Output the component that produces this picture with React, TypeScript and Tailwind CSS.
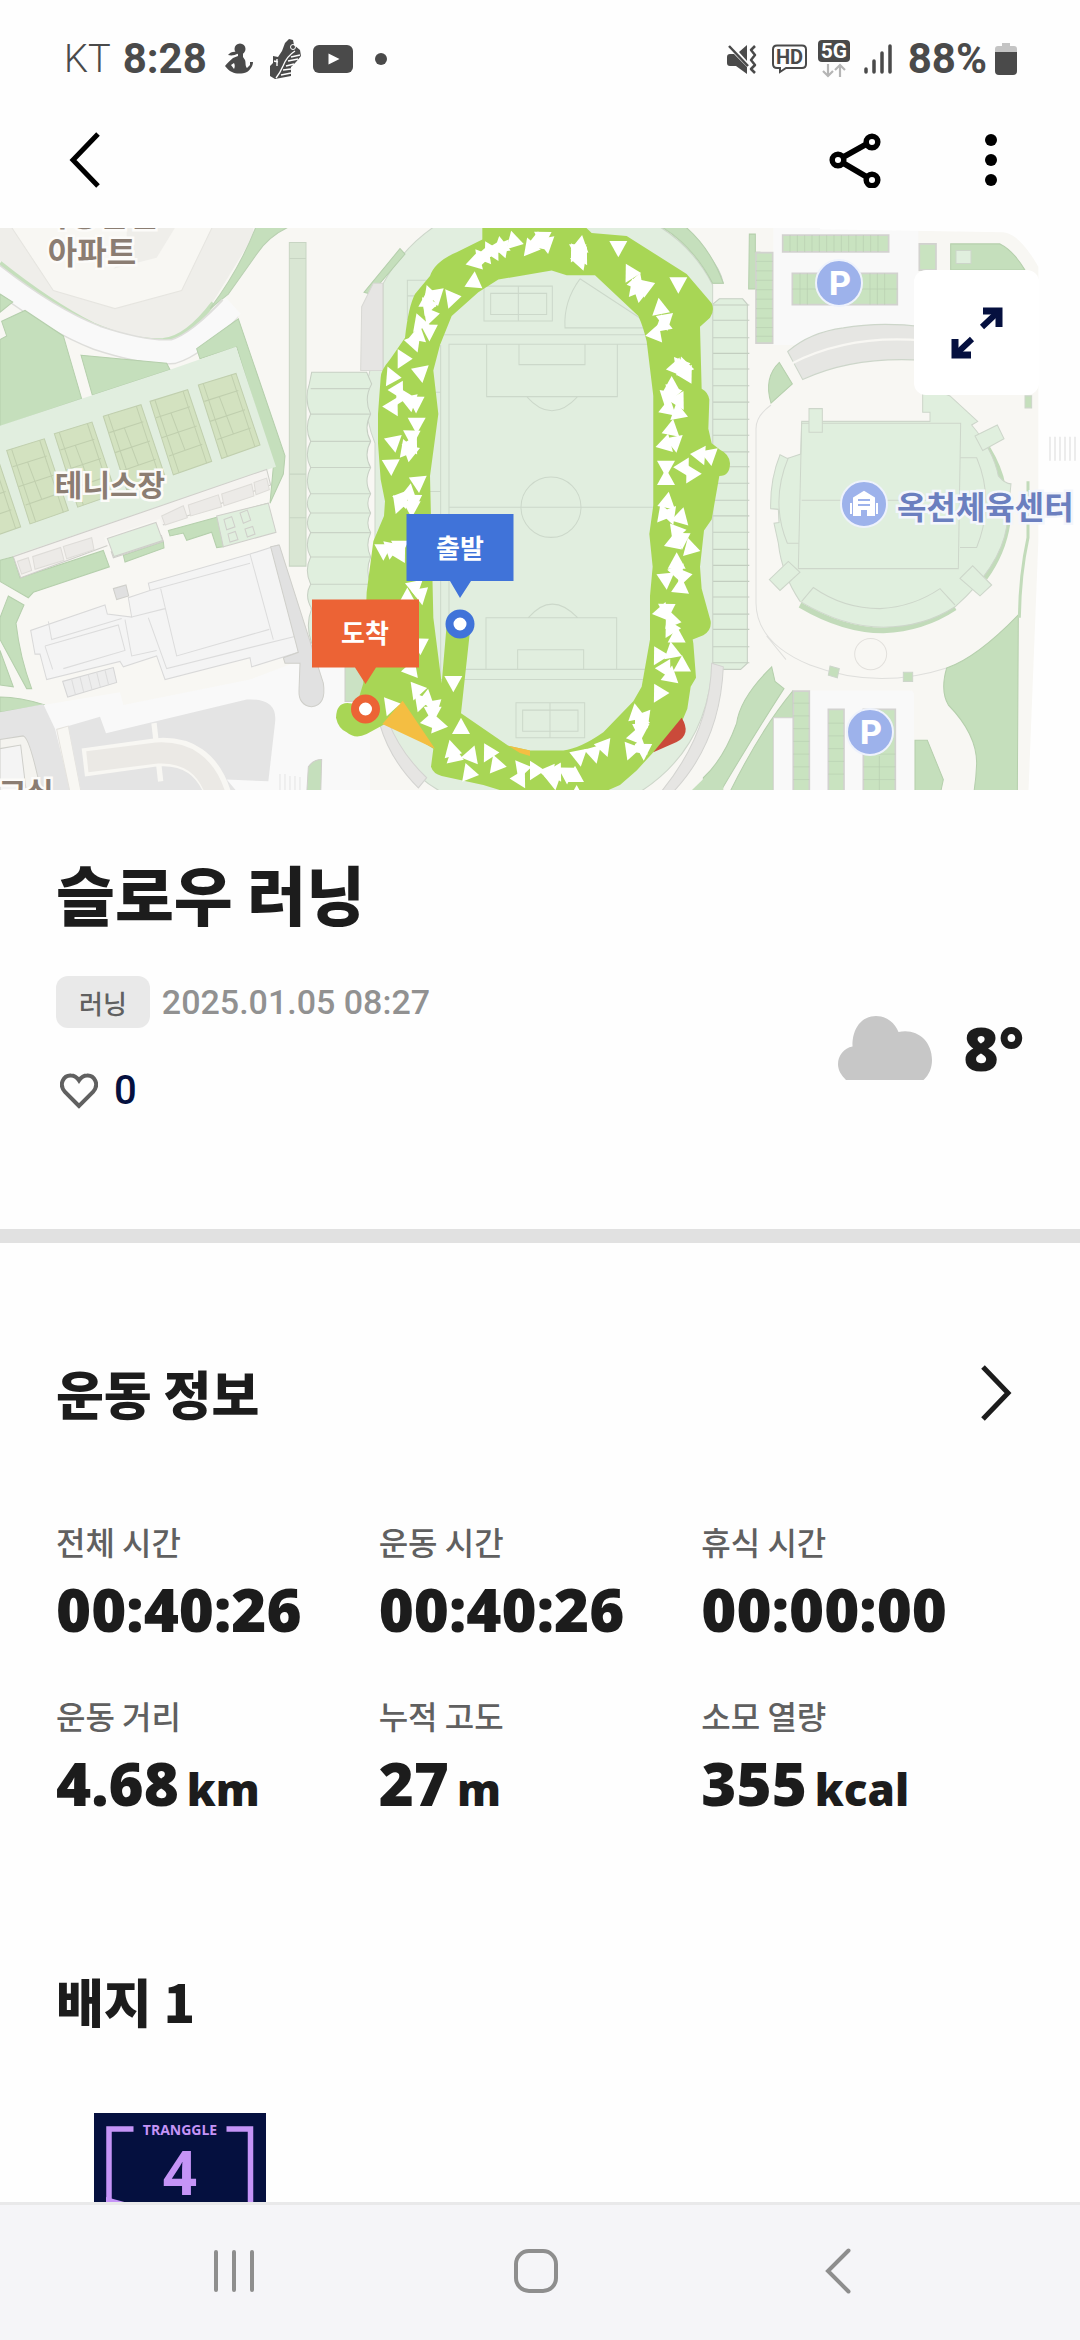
import React from 'react';

interface Stat {
  label: string;
  value: string;
  unit?: string;
}

const STATS: Stat[] = [
  { label: '전체 시간', value: '00:40:26' },
  { label: '운동 시간', value: '00:40:26' },
  { label: '휴식 시간', value: '00:00:00' },
  { label: '운동 거리', value: '4.68', unit: 'km' },
  { label: '누적 고도', value: '27', unit: 'm' },
  { label: '소모 열량', value: '355', unit: 'kcal' },
];

// Direction arrows along the route: x, y, rotation
const ARROWS: [number, number, number][] = [
  // top
  [583, 32, 60], [560, 42, 10], [590, 55, 170], [490, 40, -15], [540, 58, -20], [452, 55, -10], [432, 68, 30],
  [458, 68, 160], [405, 80, 20], [378, 96, 15], [418, 66, -30], [392, 86, -40], [692, 52, 10], [676, 72, -30],
  [698, 80, 30], [692, 102, 160], [688, 66, 60], [805, 64, 180], [840, 128, -30], [862, 155, 20], [892, 168, 70],
  [870, 190, 190], [855, 170, -20], [985, 164, 180], [930, 225, -10], [950, 258, 50], [918, 295, 20], [938, 270, -10],
  // right side
  [980, 388, 20], [1008, 392, 100], [988, 382, -40], [1012, 415, 150], [965, 440, 0], [948, 470, -50], [988, 478, 30],
  [955, 500, 10], [984, 512, -10], [965, 465, 200], [965, 558, 10], [948, 598, 15], [975, 602, 170], [1045, 632, -85],
  [1080, 638, 170], [948, 668, 180], [948, 695, 0], [1003, 670, 150], [1022, 680, -30], [952, 758, 10], [940, 790, -20],
  [962, 792, 40], [994, 800, 15], [976, 840, -40], [972, 868, 10], [1000, 860, 60], [1020, 884, -15], [980, 925, 0],
  [1003, 965, 80], [948, 978, 175], [992, 992, 5], [985, 950, 40], [955, 1055, 60], [938, 1060, 20], [970, 1088, 100],
  [960, 1105, -30], [980, 1128, 0], [925, 1180, -30], [966, 1170, -10], [996, 1208, 0], [948, 1215, 30], [962, 1236, 10],
  [925, 1283, -30], [858, 1340, -10], [875, 1368, 90], [860, 1402, 20], [885, 1352, 40], [840, 1440, -40], [870, 1432, 10],
  [885, 1440, 60], [868, 1385, -60],
  // bottom
  [765, 1430, 40], [735, 1448, 45], [688, 1465, 170], [675, 1512, 0], [655, 1505, 60], [620, 1500, 30], [590, 1505, -80],
  [612, 1530, 170], [560, 1500, 90], [520, 1495, 80], [512, 1518, 30], [680, 1565, 0], [438, 1480, -20], [415, 1447, -30],
  [365, 1455, 20], [355, 1503, -20], [305, 1440, -15], [318, 1462, 110], [333, 1380, 0], [310, 1260, 180], [262, 1370, -20],
  [242, 1360, 20], [255, 1320, 50], [230, 1300, 10], [198, 1275, -40], [218, 1310, 80], [118, 1318, -40], [248, 1345, 180],
  // left side
  [215, 1150, 60], [185, 1218, 20], [215, 1012, 50], [195, 1000, 170], [172, 1022, 0], [150, 888, 180], [152, 908, 150],
  [128, 888, 70], [100, 898, 180], [205, 712, 175], [178, 735, 10], [195, 755, 60], [145, 762, -40], [185, 780, 180],
  [160, 748, 40], [123, 665, 178], [132, 602, 170], [180, 628, 190], [188, 600, 30], [168, 612, -20], [190, 578, 60],
  [200, 550, 180], [202, 485, 60], [180, 490, 170], [130, 495, 30], [152, 465, -30], [146, 450, 30], [130, 418, 95],
  [213, 410, 170], [163, 368, 90], [195, 318, 40], [205, 298, 10], [242, 287, 60], [208, 266, -20], [245, 248, 80],
  [232, 205, 0], [262, 190, 50], [232, 218, -40], [245, 195, 100], [310, 200, 80], [372, 152, 5],
];

const COURTS: [number, number][] = [[0, 0], [-145, 45], [-285, 86], [-432, 134], [-575, 180], [-718, 225]];

const LEFT_TERRACE = [450, 520, 595, 667, 739, 792, 846, 913, 988, 1055];
const RIGHT_TERRACE = [220, 262, 310, 353, 396, 442, 487, 534, 578, 624, 665, 710, 757, 800, 845, 892, 936, 980, 1023, 1070, 1112, 1160, 1204];

const sans = "[font-family:'Noto_Sans_CJK_KR',sans-serif]";
const numeric = "[font-family:'Open_Sans','Noto_Sans_CJK_KR',sans-serif]";
const system = "[font-family:Roboto,'Noto_Sans_CJK_KR',sans-serif]";

const StatusBar: React.FC = () => (
  <div className={`flex h-[118px] items-center justify-between pl-16 pr-[63px] text-[#4a4a4a] ${system}`}>
    <div className="flex items-center text-[42px] leading-none">
      <span className="text-[38px] font-light">KT</span>
      <span className="ml-3 font-bold">8:28</span>
      {/* yoga pose */}
      <svg className="ml-[18px] h-8 w-[28px]" viewBox="0 0 28 32" fill="currentColor">
        <circle cx="15" cy="6" r="5.5" />
        <path d="M12 9C9 8 5 9 3 12c4 1 7 0 9-1zM13 10h5v4l2 3c1 3 0 6 2 8l3-3v-3h3c0 4-3 8-6 10-5 2-11 2-15 0-3-1-5-4-7-6 2-3 5-5 8-8l5-2zM6 22l3 4c1-2 1-4 0-6z" fillRule="evenodd" />
      </svg>
      {/* running shoe */}
      <svg className="ml-[17px] h-10 w-[31px]" viewBox="0 0 31 40">
        <path d="M15 4l4-4 4 1 1 5 6 5 1 6-5 6-5 5v9L5 40l-5-3V27l3-3 0-7 5 1 4-6z" fill="#4a4a4a" />
        <path d="M25 12Q17 17 13 27 10 34 6 39M30 16l-9 2M28 20l-10 2M24 25l-8 2M21 30l-8 1M21 34l-10 2M7 20v7M4 22l4 1" stroke="#fefefe" strokeWidth="1.4" fill="none" />
        <circle cx="23" cy="8" r="2.5" fill="none" stroke="#fefefe" />
      </svg>
      <svg className="ml-3 h-7 w-10" viewBox="0 0 40 28">
        <rect width="40" height="28" rx="6" fill="#4a4a4a" />
        <path d="M15.500 8.500v11l11-5.500z" fill="#fff" />
      </svg>
      <span className="ml-[22px] size-3 rounded-full bg-[#4a4a4a]" />
    </div>
    <div className="flex items-center text-[42px] leading-none">
      {/* mute + vibrate */}
      <svg className="h-[29px] w-[30px]" viewBox="0 0 30 29">
        <path d="M0 12q0-3 3-3h4L20 22v7L9 21H3q-3 0-3-3zM20 0v16l-8-9z" fill="#4a4a4a" />
        <path d="M2 1l19 20" stroke="#4a4a4a" strokeWidth="2.500" />
        <path d="M28 1l-4 4 4 5-4 5 4 5-4 4 4 4" fill="none" stroke="#4a4a4a" strokeWidth="2.500" strokeLinejoin="round" />
      </svg>
      <svg className="ml-[15px] h-[30px] w-[36px]" viewBox="0 0 36 30">
        <path d="M5 1.500h25q4 0 4 4V20q0 4-4 4H14l-6 4v-4H5q-4 0-4-4V5.500q0-4 4-4z" fill="none" stroke="#4a4a4a" strokeWidth="2" />
        <text x="17.500" y="20" textAnchor="middle" fontSize="20" fontWeight="700" fill="#4a4a4a">HD</text>
      </svg>
      <svg className="ml-[10px] h-[38px] w-8" viewBox="0 0 32 38">
        <rect width="32" height="22" rx="4" fill="#4a4a4a" />
        <text x="16" y="18" textAnchor="middle" fontSize="21" fontWeight="700" fill="#fff">5G</text>
        <path d="M10 24v12M5 31l5 5 5-5M22 37V25M17 30l5-5 5 5" fill="none" stroke="#b5b5b5" strokeWidth="2.200" />
      </svg>
      <svg className="ml-[14px] h-[30px] w-7" viewBox="0 0 28 30">
        <path d="M2 28v-3M10 28V17M18 28V9M26 28V2" stroke="#4a4a4a" strokeWidth="3.500" strokeLinecap="round" />
      </svg>
      <span className="ml-4 font-bold">88%</span>
      <svg className="ml-2 h-8 w-[22px]" viewBox="0 0 22 32">
        <path d="M7 0h8v3h4q3 0 3 3v4H0V6q0-3 3-3h4z" fill="#c4c4c4" />
        <path d="M0 9h22v19q0 4-4 4H4q-4 0-4-4z" fill="#4a4a4a" />
      </svg>
    </div>
  </div>
);

const AppBar: React.FC = () => (
  <header className="flex h-[110px] items-center justify-between pb-[26px] pl-[60px] pr-16">
    <button type="button" aria-label="뒤로" className="flex size-[60px] items-center justify-start pl-2">
      <svg className="h-14 w-8" viewBox="0 0 32 56" fill="none" stroke="#000" strokeWidth="5">
        <path d="M30 2L5 28l25 26" />
      </svg>
    </button>
    <div className="flex items-center gap-[85px]">
      <button type="button" aria-label="공유">
        <svg className="h-14 w-[52px]" viewBox="0 0 52 56" fill="none" stroke="#000">
          <path d="M9 28L43 9M9 28l34 20" strokeWidth="6" />
          <g fill="#fff" strokeWidth="5.500">
            <circle cx="9" cy="28" r="5.800" />
            <circle cx="43" cy="10" r="5.800" />
            <circle cx="43" cy="48" r="5.800" />
          </g>
        </svg>
      </button>
      <button type="button" aria-label="더보기" className="w-[50px]">
        <svg className="mx-auto h-14 w-3" viewBox="0 0 12 56">
          <circle cx="6" cy="8" r="6" />
          <circle cx="6" cy="28" r="6" />
          <circle cx="6" cy="48" r="6" />
        </svg>
      </button>
    </div>
  </header>
);

// West part of the map: apartments, tennis courts and the gym
const WestBlock: React.FC = () => (
  <g transform="matrix(.33333 0 0 .36364 0 225)" stroke="#cfcfca" strokeWidth="3">
    <path d="M0 0V100Q150 210 280 270Q400 315 480 315Q560 310 640 210L760 30V0z" fill="#efeeea" stroke="none" />
    <path d="M30 0L160 180 345 230 545 180 640 0z" fill="#f8f7f3" stroke="#e6e5e0" />
    <path d="M380 90L340 120 470 90 530 0H380z" fill="#efeeea" stroke="none" />
    <path d="M0 105Q150 215 280 275Q400 322 490 318Q560 312 640 215" fill="none" stroke="#c5dfbc" strokeWidth="14" />
    <path d="M880 0Q810 25 770 80L685 190 630 230Q720 120 770 0z" fill="#c5dfbc" stroke="#b9d0b1" />
    <path d="M-20 138Q150 260 290 310Q440 355 520 348Q590 330 690 228" fill="none" stroke="#dededb" strokeWidth="70" />
    <path d="M-20 138Q150 260 290 310Q440 355 520 348Q590 330 700 222" fill="none" stroke="#f9f9f9" strokeWidth="62" />
    <path d="M0 190L38 212 0 240zM5 265L75 235 190 305 245 478 0 555V315L20 305zM243 358L500 380 510 398 277 468zM590 340L715 258 855 635 850 685 810 765 820 665 710 335 600 368z" fill="#c5dfbc" stroke="#b5cfac" />
    <path d="M0 552L245 478 277 468 510 398 708 335 828 665 0 922z" fill="#e1eedf" stroke="none" />
    {COURTS.map(([dx, dy]) => (
      <g key={dx} transform={`translate(${dx} ${dy})`} stroke="#c0cfae">
        <path d="M595 440L708 408 780 605 665 642z" fill="#d3e2c0" />
        <path d="M610 437L682 636M694 412L765 610M613 485L715 455M652 590L752 558M630 540L735 508M658 472L700 574" fill="none" />
      </g>
    ))}
    <path d="M505 840L805 765 670 885 650 887 635 845 560 867 550 847 510 855zM310 895L328 940 100 1010 85 1025 0 980V922L40 912 60 970zM370 908L490 870 492 888 375 927z" fill="#c5dfbc" stroke="#b5cfac" />
    <path d="M320 860L470 815 490 870 340 915zM650 800L805 765 828 845 670 885z" fill="#e0efde" />
    <path d="M672 810L695 802 705 830 680 838zM720 792L742 784 752 812 730 820zM684 850L706 843 714 865 690 872zM735 836L758 829 765 850 742 858z" fill="#e0efde" />
    <path d="M40 912L800 672 812 715 62 970z" fill="#f5f3f0" />
    <path d="M312 860L480 808 500 848 330 898z" fill="#f8f7f3" stroke="none" />
    <path d="M322 862L468 818 488 868 342 912z" fill="#e0efde" />
    <path d="M52 925L85 915 95 950 65 960zM98 912L182 887 192 922 105 947zM190 884L275 860 282 893 200 918zM485 800L550 772 562 805 495 825zM565 770L655 742 665 775 572 800zM665 740L755 712 762 745 672 772zM762 708L800 696 808 728 768 742z" fill="#eceae7" stroke="#dedcd8" />
    <path d="M25 1020L72 1045 48 1095Q60 1190 95 1275H80L0 1140V1080zM0 1170L40 1270 0 1265zM0 1298Q60 1298 135 1320L0 1340z" fill="#c5dfbc" stroke="#b5cfac" />

    {/* gym */}
    <path d="M445 985L750 905 835 880 895 1175 755 1215 750 1190 495 1250 470 1185 370 1215 360 1200 140 1250 120 1180 105 1180 92 1115 315 1045 322 1070 395 1078 385 1025 450 1005z" fill="#f4f4f4" stroke="#d9d9d9" />
    <path d="M450 1005L750 930M482 1000L530 1185 808 1112M750 905L820 1140M395 1078L495 1055M445 1080L500 1220 890 1130M375 1085L395 1185 470 1170M135 1158L355 1100 375 1170 190 1220M145 1090L155 1140 365 1082M135 1158L158 1222" fill="none" stroke="#dcdcdc" />
    <path d="M340 1000L378 990 386 1020 350 1030z" fill="#e0e0e0" />
    <path d="M130 1320L360 1285 370 1320 750 1250 895 1200 1035 1215H1110V1568H800L240 1568z" fill="#f9f9f9" stroke="none" />
    <path d="M188 1255L340 1217 350 1258 203 1298z" fill="#ededed" stroke="#d5d5d5" />
    <path d="M215 1250L226 1290M240 1243L251 1284M265 1237L276 1278M290 1230L301 1271M315 1224L326 1265" stroke="#dcdcdc" />
    <path d="M812 885L838 880 970 1260Q980 1320 935 1325Q895 1320 897 1280L900 1205 855 1205 850 1190 895 1175z" fill="#e1e1e1" />
    <path d="M0 1340L130 1318 165 1385 215 1568H0z" fill="#e4e4e4" stroke="none" />
    <path d="M170 1387L205 1378 245 1568H212z" fill="#f8f7f3" stroke="#e5e3de" />
    <path d="M205 1378L300 1352 318 1398 740 1305Q835 1300 825 1370L805 1530 680 1525 720 1568H245z" fill="#e4e4e4" stroke="none" />
    <path d="M462 1370L482 1530" stroke="#f8f7f3" strokeWidth="16" />
    <path d="M250 1478L470 1450Q610 1440 655 1568" fill="none" stroke="#f8f7f3" strokeWidth="78" />
    <path d="M262 1476L470 1452Q605 1445 648 1568" fill="none" stroke="#ebe9e5" strokeWidth="58" />
    <path d="M0 1415L70 1405Q90 1410 125 1568H0z" fill="#f4f3ef" />
    <path d="M0 1440L62 1430 80 1568H0z" fill="#f4f4f4" />
    <path d="M920 1568L925 1490Q940 1470 965 1470L962 1568z" fill="#c5dfbc" />
    <path d="M840 1510V1568M855 1510V1568M870 1515V1568M885 1515V1568M900 1518V1568" stroke="#e4e4e4" />

    <path d="M868 48H918V938H868z" fill="#d9e6d3" stroke="#c8d5c3" />
    <path d="M868 92H918M868 685H918M868 805H918" stroke="#c8d5c3" />
    <path d="M1035 1200H1110V1310H1035z" fill="#cbe2c4" />
  </g>
);

// Running track with the football pitch, and the recorded route on it
const TrackBlock: React.FC = () => (
  <g transform="matrix(.33333 0 0 .36364 350 225)">
    <path d="M260 0Q160 60 100 160V400H60Q30 500 75 600V1260Q120 1500 300 1570H850Q1075 1450 1088 1200V165Q1030 60 920 0z" fill="#e1eedf" stroke="#cdd6ca" strokeWidth="3" />
    <path d="M42 185L150 65 165 80 62 190zM920 0H1000Q1080 60 1120 160H1088Q1030 60 940 8z" fill="#c5dfbc" stroke="#b5cfac" strokeWidth="3" />
    <path d="M35 225L70 160H98V400H32z" fill="#e6e5e3" stroke="#d8d8d4" strokeWidth="3" />
    <path d="M-115 405H50L65 437Q40 478 62 520Q40 558 62 595Q40 632 62 667Q40 705 62 739Q45 765 62 792Q45 820 62 846Q45 880 62 913Q45 950 62 988Q45 1020 62 1055V1150H-115Q-135 1100 -115 1055Q-138 1020 -118 988Q-138 950 -118 913Q-138 880 -118 846Q-138 820 -118 792Q-138 765 -118 739Q-138 705 -118 667Q-138 632 -118 595Q-138 558 -118 520Q-138 478 -122 437z" fill="#e0efde" stroke="#c6cfc3" strokeWidth="3" />
    {LEFT_TERRACE.map((y) => (
      <path key={y} d={`M-118 ${y}H60`} stroke="#c9d3c6" strokeWidth="3" />
    ))}
    <path d="M90 1375L115 1365Q150 1450 230 1520L205 1548Q120 1470 90 1375zM1085 1205L1120 1215Q1110 1430 960 1568H925Q1080 1400 1085 1205z" fill="#e6e5e3" stroke="#d3d3d0" strokeWidth="3" />
    <path d="M1120 1470L1010 1568H1120z" fill="#c5dfbc" />

    <g fill="none" stroke="#ccd8ca" strokeWidth="3">
      <path d="M270 302H890M270 1250H890M272 330V1260M297 328H912V1222H297zM297 776H912M410 328H802V472H410zM507 328H705V384H507zM530 472Q605 550 683 472M408 1222V1080H800V1222M503 1222V1168H701V1222M535 1080Q605 1005 683 1080" />
      <ellipse cx="603" cy="776" rx="90" ry="83" />
      <path d="M402 168H607V264H402zM422 188H590V246H422zM505 168V264M498 1314H704V1410H498zM518 1334H684V1392H518zM600 1314V1410" />
      <path d="M690 148L880 262M690 148Q640 210 645 283H880" />
      <path d="M172 152H240V260H172zM172 195H230" />
      <path d="M240 460H272M240 733H272" />
    </g>

    <path
      d="M397 0V40L320 75Q255 100 240 140L195 190Q175 225 165 310L120 370Q92 400 92 420L84 520V600L92 700 105 760 102 800 70 870 50 1010 40 1260 20 1320Q-40 1300 -42 1355Q-35 1385 -10 1395Q15 1415 50 1400L120 1365 250 1440 243 1490Q250 1510 275 1515L400 1540 500 1568H740L810 1540 860 1500 910 1450 980 1400 1012 1330 1022 1270 1038 1245 1030 1150 1028 1140 1060 1128Q1085 1115 1082 1090L1055 1000 1050 940 1062 840 1085 810 1108 690Q1140 690 1140 655Q1138 630 1110 618L1085 600 1075 560 1078 480Q1075 460 1055 450L1050 280 1080 255Q1095 235 1085 215L1010 135 830 30 725 22 700 0z
         M605 125L445 150 385 185 305 250 270 330 250 400 265 520 240 690 247 960 250 1080 275 1260 290 1100H362L333 1343 475 1432 540 1445H640Q690 1440 760 1395L850 1310 875 1270 900 1140V1020L908 940 898 850 910 770V470L890 320Q880 280 865 250L735 138H650z"
      fill="#a8d655"
      fillRule="evenodd"
    />
    <path d="M158 1308L255 1440 97 1372zM475 1432L540 1445V1460L510 1452z" fill="#f4be42" />
    <path d="M995 1355Q1025 1400 980 1422L910 1450z" fill="#ca4a3a" />
    {ARROWS.map(([x, y, deg], i) => (
      <path key={i} d="M0-25L27 20H-27z" fill="#fff" transform={`translate(${x} ${y}) rotate(${deg})`} />
    ))}
  </g>
);

// Stadium side: sports centre, parking lots and gardens
const EastBlock: React.FC = () => (
  <g transform="matrix(.33333 0 0 .36364 710 225)" stroke="#cdd6ca" strokeWidth="3">
    <path d="M190 8H625V330H190zM300 1280H600Q612 1280 612 1295V1568H300z" fill="#f9f9f9" stroke="none" />
    <path d="M330 0V12L880 20Q930 25 985 115V870L955 1568H1130V0z" fill="#fefefe" stroke="none" />
    <path d="M28 203H98L112 218V1205L92 1222H28L8 1205V218z" fill="#e0efde" stroke="#c6cfc3" />
    {RIGHT_TERRACE.map((y) => (
      <path key={y} d={`M4 ${y}H118`} stroke="#c3cec0" />
    ))}
    <path d="M0 90Q30 120 40 160H0z" fill="#c5dfbc" />
    <path d="M118 25H136V75H150V176H116zM722 52H870Q910 70 945 124H722z" fill="#c5dfbc" stroke="#b5cfac" />
    <path d="M738 70H783V106H738z" fill="#e0efde" />
    <path d="M138 76H188V325H138zM218 28H536V74H218zM247 133H562V219H247zM628 52H678V124H628z" fill="#c9e3c0" stroke="#d2d2cf" strokeWidth="5" />
    <path d="M138 100H188M138 126H188M138 152H188M138 178H188M138 204H188M138 230H188M138 256H188M138 282H188M138 306H188M240 28V74M262 28V74M284 28V74M306 28V74M328 28V74M350 28V74M372 28V74M394 28V74M416 28V74M438 28V74M460 28V74M482 28V74M504 28V74M270 133V219M292 133V219M480 133V219M502 133V219M524 133V219M247 176H562" stroke="#b9d0b1" strokeWidth="2" />
    <path d="M233 348Q300 295 400 283Q510 265 640 280V372Q430 360 278 425z" fill="#e6e6e3" />
    <path d="M247 380Q420 300 640 318" fill="none" stroke="#f8f7f3" strokeWidth="6" />
    <path d="M208 378L247 437 183 490Q160 420 208 378z" fill="#c5dfbc" stroke="#b5cfac" />
    <path d="M183 495Q138 525 138 560V1040Q140 1150 300 1210Q500 1280 710 1218M170 1130L228 1195" fill="none" stroke="#dfdfdc" />

    {/* sports centre */}
    <path d="M270 1045Q400 1115 520 1115Q640 1110 735 1052M832 612Q870 670 878 715M893 820Q880 900 825 970" fill="none" stroke="#c2dbba" strokeWidth="16" />
    <path d="M275 540H660V515H638V440L720 470 803 540 785 550Q850 620 865 690Q885 712 903 712L890 830Q870 940 735 1050Q640 1106 520 1106Q400 1106 270 1035Q215 960 205 875L192 820 207 818 205 782 182 780Q180 700 210 632L232 642 272 630z" fill="#e0efde" />
    <path d="M275 545H752L745 945H265zM275 757H750M752 640H800Q855 760 800 887H750M235 640Q180 760 232 875H265M275 1035L310 997Q400 1055 510 1055Q610 1050 690 1000L735 1045" fill="none" />
    <path d="M178 975L235 925 270 955 210 1005zM750 972L788 937 845 990 810 1020zM795 580L862 550 882 588 818 620zM297 505H337V570H297z" fill="#e0efde" />
    <ellipse cx="482" cy="1180" rx="48" ry="43" fill="none" stroke="#e2e0dc" />
    <path d="M360 1213L388 1220 382 1245 355 1238zM580 1230H608V1255H580z" fill="#c5dfbc" />

    <path d="M925 1072Q800 1190 710 1218Q690 1280 715 1320Q800 1400 800 1480Q798 1530 790 1568H922z" fill="#c5dfbc" stroke="#b5cfac" />
    <path d="M954 705V860Q930 960 928 1080" fill="none" stroke="#c2dbba" strokeWidth="9" />
    <path d="M945 470H965V503H945z" fill="#c5dfbc" />
    <path d="M1020 582V648M1035 582V648M1050 582V648M1065 582V648M1080 582V648M1095 582V648" stroke="#ececec" strokeWidth="6" />

    {/* south lots */}
    <path d="M185 1215Q90 1300 80 1370Q40 1470 -20 1520V1568H25Q120 1420 222 1275L195 1255zM248 1282Q150 1390 55 1568H190V1355H250zM615 1417H652L700 1525 690 1568H615z" fill="#c5dfbc" stroke="#b5cfac" />
    <path d="M190 1355H250V1568H190z" fill="#f9f9f9" stroke="#d5d5d2" />
    <path d="M250 1282H298V1568H250zM355 1332H402V1568H355zM460 1332H556V1568H460z" fill="#c9e3c0" stroke="#d2d2cf" strokeWidth="5" />
    <path d="M250 1315H298M250 1350H298M250 1385H298M250 1420H298M250 1455H298M250 1490H298M250 1525H298M355 1370H402M355 1405H402M355 1440H402M355 1475H402M355 1510H402M460 1455H556M460 1490H556M460 1525H556M508 1460V1568" stroke="#b9d0b1" strokeWidth="2" />
  </g>
);

const RouteMap: React.FC = () => (
  <section className="relative">
    <svg className={`block w-full ${sans}`} viewBox="0 228 1080 562" role="img" aria-label="운동 경로 지도">
      <rect y="228" width="1080" height="562" fill="#f8f7f3" />
      <EastBlock />
      <WestBlock />
      <TrackBlock />

      <g fill="#8b7d72" stroke="#fcfbf9" strokeWidth="5" paintOrder="stroke" fontWeight="700" textAnchor="middle">
        <text x="99" y="226" fontSize="32">가양한신</text>
        <text x="92" y="264" fontSize="32">아파트</text>
        <text x="110" y="496" fontSize="30">테니스장</text>
        <text x="26" y="804" fontSize="30">교실</text>
      </g>

      <g fill="#9db2eb" stroke="#eef2fc" strokeWidth="2">
        <circle cx="839" cy="283" r="23" />
        <circle cx="870" cy="732" r="23" />
        <circle cx="864" cy="504" r="23" />
      </g>
      <g className="[font-family:Roboto,sans-serif]" fill="#fff" fontSize="34" fontWeight="800" textAnchor="middle">
        <text x="840" y="295">P</text>
        <text x="871" y="744">P</text>
      </g>
      <path d="M854 498l10-6 10 6v17h-6v-6h-8v6h-6zM851 503v11M877 503v11" fill="#fff" stroke="#fff" strokeWidth="2" />
      <path d="M858 500h12M858 505h12" stroke="#9db2eb" strokeWidth="2" />
      <text x="897" y="519" fontSize="32" fontWeight="700" fill="#6b7fbf" stroke="#f4f6fc" strokeWidth="5" paintOrder="stroke">옥천체육센터</text>

      {/* finish */}
      <path d="M312 599.500H419V667.500H376L365.500 684 355 667.500H312z" fill="#ec6335" />
      <circle cx="365.500" cy="709" r="10.500" fill="#fff" stroke="#ec6335" strokeWidth="8" />
      {/* start */}
      <path d="M406.500 514H513.500V581H471L460 598 450 581H406.500z" fill="#4073d9" />
      <circle cx="460" cy="624" r="10.500" fill="#fff" stroke="#4073d9" strokeWidth="8" />
      <g fill="#fff" fontSize="26" fontWeight="700" textAnchor="middle">
        <text x="365" y="643">도착</text>
        <text x="460" y="558">출발</text>
      </g>
    </svg>
    <button type="button" aria-label="지도 확대" className="absolute right-[41px] top-[42px] flex size-[125px] items-center justify-center rounded-xl bg-white">
      <svg className="size-[52px]" viewBox="0 0 52 52" fill="none" stroke="#05103f">
        <path d="M32 4h16v16M20 48H4V32" strokeWidth="7" />
        <path d="M48 4L31 20M4 48l17-16" strokeWidth="6" />
      </svg>
    </button>
  </section>
);

const Summary: React.FC = () => (
  <section className="border-b-[14px] border-[#e1e1e1] px-14 pb-[114px] pt-[62px]">
    <h1 className={`text-[64px] font-black leading-[80px] text-[#1c1c1c] ${sans}`}>슬로우 러닝</h1>
    <div className="mt-11 flex items-center justify-between">
      <div>
        <div className="flex items-center gap-3">
          <span className={`flex h-[52px] items-center rounded-xl bg-[#e9e9e9] px-[23px] text-[26px] font-medium text-[#606060] ${sans}`}>러닝</span>
          <time className={`text-[34px] font-medium leading-[52px] text-[#919191] ${system}`}>2025.01.05 08:27</time>
        </div>
        <button type="button" aria-label="좋아요" className="mt-[39px] flex h-12 items-center gap-4 pl-1">
          <svg className="h-9 w-[38px]" viewBox="0 0 38 36" fill="none" stroke="#606060" strokeWidth="4">
            <path d="M19 33L5 19C-2 11 4 2 11 2.500c4 0 6 2 8 5 2-3 4-5 8-5 7-.5 13 8.500 6 16.500z" />
          </svg>
          <span className={`text-[40px] font-medium leading-none text-[#05103f] ${system}`}>0</span>
        </button>
      </div>
      <div className="flex items-center gap-8 pt-1">
        <svg className="h-16 w-[94px]" viewBox="0 0 94 64" fill="#c7c7c7">
          <path d="M8 64C3 59 0 54 0 48c0-8 6-16 14.500-17.500C14 12 24 0 38 0c11 0 19 7 22.500 16C78 12 94 24 94 44c0 8-3 15-8.500 20z" />
        </svg>
        <p className={`text-[60px] font-extrabold leading-[72px] text-[#1c1c1c] ${numeric}`}>8°</p>
      </div>
    </div>
  </section>
);

const WorkoutInfo: React.FC = () => (
  <section className="px-14 pt-[118px]">
    <div className="flex items-center justify-between">
      <h2 className={`text-[52px] font-black leading-[64px] text-[#1c1c1c] ${sans}`}>운동 정보</h2>
      <button type="button" aria-label="운동 정보 더보기" className="pr-3">
        <svg className="h-14 w-8" viewBox="0 0 32 56" fill="none" stroke="#1c1c1c" strokeWidth="5">
          <path d="M3 2l25 26L3 54" />
        </svg>
      </button>
    </div>
    <dl className="mt-24 grid grid-cols-3 gap-y-[50px]">
      {STATS.map((stat) => (
        <div key={stat.label}>
          <dt className={`text-[32px] font-medium leading-10 text-[#606060] ${sans}`}>{stat.label}</dt>
          <dd className={`mt-3 text-[60px] font-extrabold leading-[72px] text-[#1c1c1c] ${numeric}`}>
            {stat.value}
            {stat.unit && <span className="ml-2 text-[44px]">{stat.unit}</span>}
          </dd>
        </div>
      ))}
    </dl>
  </section>
);

const Badges: React.FC = () => (
  <section className="px-14 pt-36">
    <h2 className={`text-[52px] font-black leading-[64px] text-[#1c1c1c] ${sans}`}>배지 1</h2>
    <svg className={`ml-[38px] mt-20 h-[200px] w-[172px] ${numeric}`} viewBox="0 0 172 200" role="img" aria-label="트랭글 배지">
      <rect width="172" height="200" fill="#05103f" />
      <path d="M39.500 16H15v184M132.500 16h24v184" fill="none" stroke="#c594f7" strokeWidth="5.500" />
      <path d="M12 84l22 6 40 16H12z" fill="#c594f7" />
      <text x="86" y="22" textAnchor="middle" fontSize="14" fontWeight="700" fill="#c594f7">TRANGGLE</text>
      <text x="86" y="82" textAnchor="middle" fontSize="60" fontWeight="700" fill="#c594f7">4</text>
    </svg>
  </section>
);

const NavBar: React.FC = () => (
  <nav className="grid h-[138px] shrink-0 grid-cols-3 border-t-[3px] border-[#e9e9ea] bg-[#f5f5f8] pb-1 pl-[83px] pr-[91px]">
    <button type="button" aria-label="최근 앱" className="flex items-center justify-center">
      <svg className="h-11 w-10" viewBox="0 0 40 44" stroke="#8e8e8e" strokeWidth="4" strokeLinecap="round">
        <path d="M2 3v38M20 3v38M38 3v38" />
      </svg>
    </button>
    <button type="button" aria-label="홈" className="flex items-center justify-center">
      <svg className="size-11" viewBox="0 0 44 44" fill="none" stroke="#8e8e8e" strokeWidth="4">
        <rect x="2" y="2" width="40" height="40" rx="13" />
      </svg>
    </button>
    <button type="button" aria-label="이전" className="flex items-center justify-center">
      <svg className="h-[46px] w-[26px]" viewBox="0 0 26 46" fill="none" stroke="#8e8e8e" strokeWidth="4" strokeLinecap="round">
        <path d="M23.500 2.500L3 23l20.500 20.500" />
      </svg>
    </button>
  </nav>
);

export default function App() {
  return (
    <div className="flex h-screen flex-col bg-[#fefefe]">
      <StatusBar />
      <AppBar />
      <main className="min-h-0 flex-1 overflow-hidden">
        <RouteMap />
        <Summary />
        <WorkoutInfo />
        <Badges />
      </main>
      <NavBar />
    </div>
  );
}
